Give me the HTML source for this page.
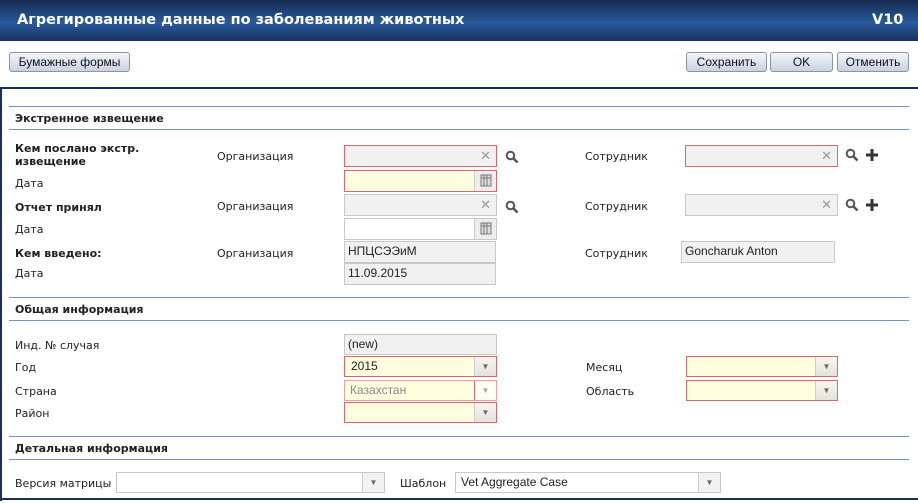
<!DOCTYPE html>
<html><head><meta charset="utf-8"><style>
*{margin:0;padding:0;box-sizing:border-box}
body{width:918px;height:503px;background:#fff;position:relative;overflow:hidden;font-family:"DejaVu Sans","Liberation Sans",sans-serif;font-size:11px;color:#222}
.a{position:absolute}
.title{left:0;top:0;width:918px;height:41px;background:linear-gradient(#172c50 0%,#24518f 45%,#2a5a9c 55%,#183462 100%);color:#fff;font-weight:bold;font-size:14.5px}
.btn{height:20px;border:1px solid #8a94a6;border-radius:3px;background:linear-gradient(#f4f6fa,#c9d2e0);font-family:"Liberation Sans",sans-serif;font-size:12px;text-align:center;line-height:18px;color:#111}
.ln{height:1px;background:#7393c4;left:9px;width:900px}
.h{font-weight:bold;font-size:11px;left:15px;color:#222}
.b{font-weight:bold}
.in{border:1px solid #c8c8c8;background:#f1f1f1;height:22px;font-size:12px;line-height:20px;padding-left:3px;color:#222;font-family:"Liberation Sans",sans-serif}
.red{border-color:#e0646c}
.y{background:#ffffe0}
.w{background:#fff}
.x{position:absolute;right:5px;top:0;color:#999;font-size:13px}
.dd{position:absolute;right:0;top:0;bottom:0;width:22px;border-left:1px solid #ccc;background:linear-gradient(#f6f6f0,#e4e4dc);color:#666;font-size:8px;text-align:center;line-height:20px}
.cal{position:absolute;right:0;top:0;bottom:0;width:22px;border-left:1px solid #ccc;background:#eee}
</style></head><body>
<div class="a title"><span class="a" style="left:17px;top:12px">Агрегированные данные по заболеваниям животных</span><span class="a" style="left:872px;top:12px">V10</span></div>
<div class="a btn" style="left:9px;top:52px;width:121px">Бумажные формы</div>
<div class="a btn" style="left:686px;top:52px;width:81px">Сохранить</div>
<div class="a btn" style="left:770px;top:52px;width:63px">OK</div>
<div class="a btn" style="left:837px;top:52px;width:72px">Отменить</div>
<div class="a" style="left:0;top:87px;width:918px;height:2px;background:#17305a"></div>
<div class="a" style="left:0;top:87px;width:2px;height:414px;background:#17305a"></div>
<div class="a" style="left:0;top:498px;width:918px;height:2px;background:#17305a"></div>

<div class="a ln" style="top:106px"></div><div class="a h" style="top:112px">Экстренное извещение</div><div class="a ln" style="top:129px"></div>
<div class="a b" style="left:15px;top:142px;line-height:13px">Кем послано экстр.<br>извещение</div>
<div class="a" style="left:217px;top:150px">Организация</div>
<div class="a in red" style="left:344px;top:145px;width:153px"><span class="x">✕</span></div>
<svg class="a" style="left:505px;top:150px" width="16" height="14"><circle cx="5.5" cy="5.5" r="3.8" fill="none" stroke="#555" stroke-width="2"/><path d="M8 8l4.5 4.5" stroke="#555" stroke-width="2.6"/></svg>
<div class="a" style="left:585px;top:150px">Сотрудник</div>
<div class="a in red" style="left:685px;top:145px;width:153px"><span class="x">✕</span></div>
<svg class="a" style="left:845px;top:148px" width="36" height="14"><circle cx="5.5" cy="5.5" r="3.8" fill="none" stroke="#555" stroke-width="2"/><path d="M8 8l4.5 4.5" stroke="#555" stroke-width="2.6"/><path d="M27 1v12M21 7h12" stroke="#333" stroke-width="3"/></svg>
<div class="a" style="left:15px;top:177px">Дата</div>
<div class="a in red y" style="left:344px;top:170px;width:153px"><span class="cal"><svg width="22" height="20"><rect x="6" y="4" width="10" height="11" fill="#ddd" stroke="#777"/><path d="M6 7h10M9 4v11M12 4v11" stroke="#777"/></svg></span></div>

<div class="a b" style="left:15px;top:201px">Отчет принял</div>
<div class="a" style="left:217px;top:200px">Организация</div>
<div class="a in" style="left:344px;top:194px;width:153px"><span class="x">✕</span></div>
<svg class="a" style="left:505px;top:200px" width="16" height="14"><circle cx="5.5" cy="5.5" r="3.8" fill="none" stroke="#555" stroke-width="2"/><path d="M8 8l4.5 4.5" stroke="#555" stroke-width="2.6"/></svg>
<div class="a" style="left:585px;top:200px">Сотрудник</div>
<div class="a in" style="left:685px;top:194px;width:153px"><span class="x">✕</span></div>
<svg class="a" style="left:845px;top:198px" width="36" height="14"><circle cx="5.5" cy="5.5" r="3.8" fill="none" stroke="#555" stroke-width="2"/><path d="M8 8l4.5 4.5" stroke="#555" stroke-width="2.6"/><path d="M27 1v12M21 7h12" stroke="#333" stroke-width="3"/></svg>
<div class="a" style="left:15px;top:223px">Дата</div>
<div class="a in w" style="left:344px;top:218px;width:153px"><span class="cal"><svg width="22" height="20"><rect x="6" y="4" width="10" height="11" fill="#ddd" stroke="#777"/><path d="M6 7h10M9 4v11M12 4v11" stroke="#777"/></svg></span></div>

<div class="a b" style="left:15px;top:247px">Кем введено:</div>
<div class="a" style="left:217px;top:247px">Организация</div>
<div class="a in" style="left:344px;top:241px;width:152px;line-height:18px">НПЦСЭЭиМ</div>
<div class="a" style="left:585px;top:247px">Сотрудник</div>
<div class="a in" style="left:681px;top:241px;width:154px;line-height:18px">Goncharuk Anton</div>
<div class="a" style="left:15px;top:267px">Дата</div>
<div class="a in" style="left:344px;top:263px;width:152px;line-height:18px">11.09.2015</div>

<div class="a ln" style="top:297px"></div><div class="a h" style="top:303px">Общая информация</div><div class="a ln" style="top:320px"></div>
<div class="a" style="left:15px;top:339px">Инд. № случая</div>
<div class="a in" style="left:344px;top:334px;width:153px;height:21px;line-height:19px">(new)</div>
<div class="a" style="left:15px;top:361px">Год</div>
<div class="a in red y" style="left:344px;top:356px;width:153px;height:21px;line-height:19px;padding-left:6px">2015<span class="dd">▼</span></div>
<div class="a" style="left:586px;top:361px">Месяц</div>
<div class="a in red y" style="left:686px;top:356px;width:152px;height:21px"><span class="dd">▼</span></div>
<div class="a" style="left:15px;top:385px">Страна</div>
<div class="a in y" style="left:344px;top:380px;width:153px;height:21px;line-height:19px;padding-left:5px;border-color:#eca0a4;color:#888">Казахстан<span class="dd" style="color:#aaa;background:#fffff0;border-left-color:#e0646c">▼</span></div>
<div class="a" style="left:586px;top:385px">Область</div>
<div class="a in red y" style="left:686px;top:380px;width:152px;height:21px"><span class="dd">▼</span></div>
<div class="a" style="left:15px;top:407px">Район</div>
<div class="a in red y" style="left:344px;top:402px;width:153px;height:21px"><span class="dd">▼</span></div>

<div class="a ln" style="top:436px"></div><div class="a h" style="top:442px">Детальная информация</div><div class="a ln" style="top:459px"></div>
<div class="a" style="left:15px;top:477px">Версия матрицы</div>
<div class="a in w" style="left:116px;top:472px;width:269px;height:21px"><span class="dd" style="background:#f2f2f2">▼</span></div>
<div class="a" style="left:400px;top:477px">Шаблон</div>
<div class="a in w" style="left:455px;top:472px;width:266px;height:21px;line-height:19px;padding-left:5px">Vet Aggregate Case<span class="dd" style="background:#f2f2f2">▼</span></div>
</body></html>
